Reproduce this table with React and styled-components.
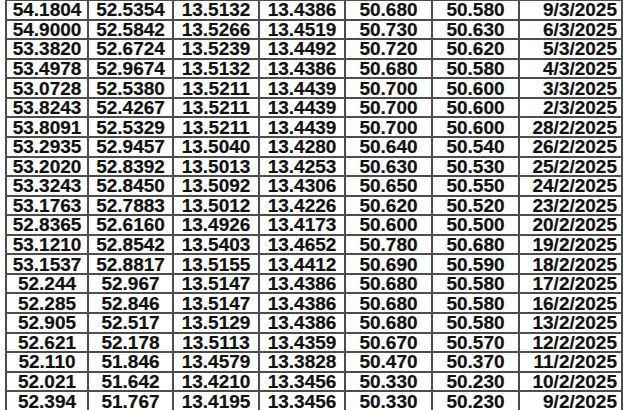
import React from "react";
import styled, { createGlobalStyle } from "styled-components";

const Global = createGlobalStyle`
  html, body { margin: 0; padding: 0; background: #ffffff; }
  body { width: 624px; height: 410px; overflow: hidden; }
`;

const Page = styled.div`
  width: 624px;
  height: 410px;
  padding-left: 5px;
  box-sizing: border-box;
  background: #fff;
`;

const Table = styled.table`
  border-collapse: collapse;
  table-layout: fixed;
  width: 616px;
  height: 411px;
  margin-top: -1px;
  font-family: "Liberation Sans", Arial, sans-serif;
  font-weight: bold;
  font-size: 19px;
  color: #111;
  -webkit-text-stroke: 0.2px #111;
`;

const Row = styled.tr`
  height: 19.57px;
`;

const Cell = styled.td`
  border: 2px solid #4d4d4d;
  padding: 1px ${(p) => (p.$right ? "4px" : "0")} 0 0;
  text-align: ${(p) => (p.$right ? "right" : "center")};
  line-height: 14px;
  height: 14px;
  white-space: nowrap;
  overflow: hidden;
  vertical-align: middle;
`;

const widths = [82, 85, 86, 86, 87, 87, 103];

const data = [
  ["54.1804", "52.5354", "13.5132", "13.4386", "50.680", "50.580", "9/3/2025"],
  ["54.9000", "52.5842", "13.5266", "13.4519", "50.730", "50.630", "6/3/2025"],
  ["53.3820", "52.6724", "13.5239", "13.4492", "50.720", "50.620", "5/3/2025"],
  ["53.4978", "52.9674", "13.5132", "13.4386", "50.680", "50.580", "4/3/2025"],
  ["53.0728", "52.5380", "13.5211", "13.4439", "50.700", "50.600", "3/3/2025"],
  ["53.8243", "52.4267", "13.5211", "13.4439", "50.700", "50.600", "2/3/2025"],
  ["53.8091", "52.5329", "13.5211", "13.4439", "50.700", "50.600", "28/2/2025"],
  ["53.2935", "52.9457", "13.5040", "13.4280", "50.640", "50.540", "26/2/2025"],
  ["53.2020", "52.8392", "13.5013", "13.4253", "50.630", "50.530", "25/2/2025"],
  ["53.3243", "52.8450", "13.5092", "13.4306", "50.650", "50.550", "24/2/2025"],
  ["53.1763", "52.7883", "13.5012", "13.4226", "50.620", "50.520", "23/2/2025"],
  ["52.8365", "52.6160", "13.4926", "13.4173", "50.600", "50.500", "20/2/2025"],
  ["53.1210", "52.8542", "13.5403", "13.4652", "50.780", "50.680", "19/2/2025"],
  ["53.1537", "52.8817", "13.5155", "13.4412", "50.690", "50.590", "18/2/2025"],
  ["52.244", "52.967", "13.5147", "13.4386", "50.680", "50.580", "17/2/2025"],
  ["52.285", "52.846", "13.5147", "13.4386", "50.680", "50.580", "16/2/2025"],
  ["52.905", "52.517", "13.5129", "13.4386", "50.680", "50.580", "13/2/2025"],
  ["52.621", "52.178", "13.5113", "13.4359", "50.670", "50.570", "12/2/2025"],
  ["52.110", "51.846", "13.4579", "13.3828", "50.470", "50.370", "11/2/2025"],
  ["52.021", "51.642", "13.4210", "13.3456", "50.330", "50.230", "10/2/2025"],
  ["52.394", "51.767", "13.4195", "13.3456", "50.330", "50.230", "9/2/2025"],
];

export default function App() {
  return (
    <Page>
      <Global />
      <Table>
        <colgroup>
          {widths.map((w, i) => (
            <col key={i} style={{ width: w }} />
          ))}
        </colgroup>
        <tbody>
          {data.map((r, i) => (
            <Row key={i}>
              {r.map((c, j) => (
                <Cell key={j} $right={j === 6}>
                  {c}
                </Cell>
              ))}
            </Row>
          ))}
        </tbody>
      </Table>
    </Page>
  );
}
